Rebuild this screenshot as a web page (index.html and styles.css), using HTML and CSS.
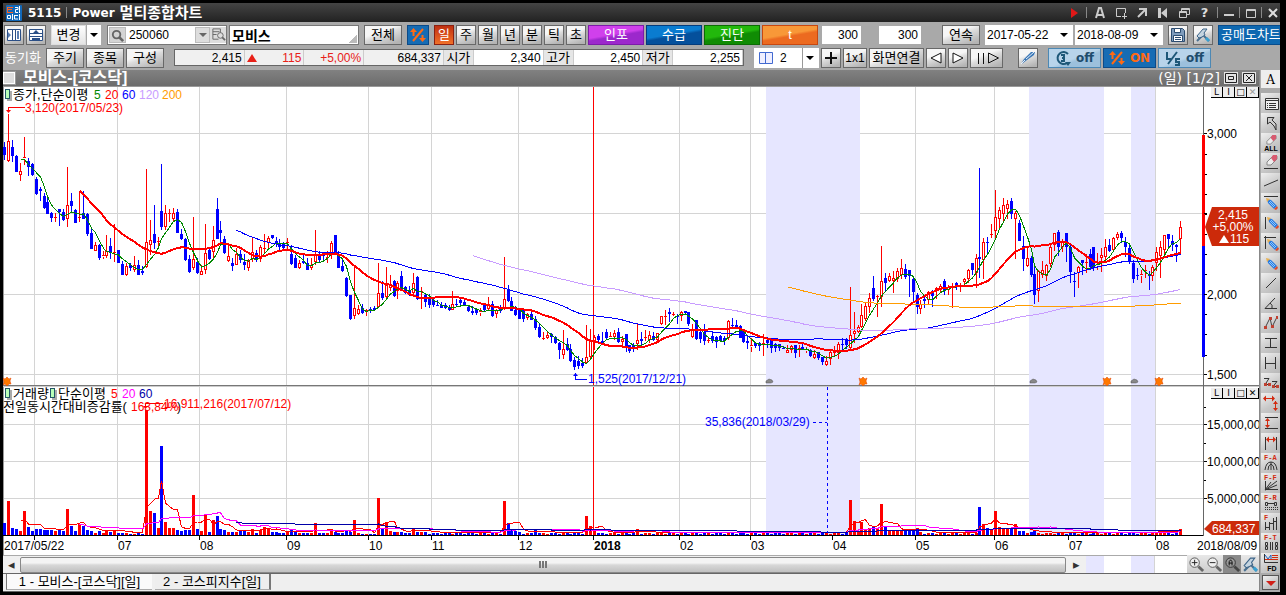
FILE: index.html
```html
<!DOCTYPE html>
<html lang="ko">
<head>
<meta charset="utf-8">
<title>5115 Power 멀티종합차트</title>
<link rel="stylesheet" href="styles.css">
</head>
<body>
<svg class="defs" aria-hidden="true">
  <symbol id="pencil" viewBox="0 0 12 12"><path d="M1 1l4 1 6 6-3 3-6-6z" fill="#2a7be0"/><path d="M3 4l5 5M4 3l5 5" stroke="#8cc8ff"/><path d="M0 0l4 1-3 3z" fill="#e8b050"/><path d="M8 11l3-3 1 2-2 2z" fill="#e04828"/></symbol>
  <symbol id="eraser" viewBox="0 0 12 12"><path d="M1 8l6-6 4 0 0 3-6 6-4 0z" fill="#eee" stroke="#888"/><path d="M5 4l2-3 4 0 0 4-3 3z" fill="#d85a70"/></symbol>
  <symbol id="lens" viewBox="0 0 18 18"><path d="M11 11l5 5" stroke="#666" stroke-width="3"/><circle cx="7" cy="7" r="5" fill="#eee" stroke="#555"/></symbol>
  <symbol id="wrench" viewBox="0 0 16 16"><path d="M2 14l7-7M7 7l7 7" stroke="#4a7090" stroke-width="2" fill="none"/><path d="M2 9l6-7h4l-3 4 1 2-3 2-3 1z" fill="#c4d4e0" stroke="#3d6488"/><path d="M11 11l3 3" stroke="#3aa0d0" stroke-width="3"/></symbol>
  <symbol id="updown" viewBox="0 0 16 16"><path d="M3.500 4v5M12.500 8v5M3 14L13 2" stroke="currentColor" stroke-width="2" fill="none"/><path d="M0 5l3.500-4L7 5zM9 11h7l-3.500 4z" fill="currentColor"/></symbol>
</svg>
<div class="window">
  <header class="titlebar">
    <svg class="logo" viewBox="0 0 16 16"><rect width="16" height="16" rx="1" fill="#1268b8"/><path d="M1 2.500h6M1 4.500h5M1 7.500h6M1.500 2v6" stroke="#ff6420" fill="none"/><path d="M9 2.500h3v2H9.500v3H12M13.500 1v7M1.500 10.500h3v3h-3zM6.500 9v6M8 10.500h4M8.500 10v4H12M13.500 9v6" stroke="#fff" fill="none"/></svg>
    <h1><span class="latin">5115</span><i></i><span class="latin">Power</span> 멀티종합차트</h1>
    <div class="winbtns">
      <button aria-label="재생"><svg viewBox="0 0 12 12"><path d="M3 1l7 5-7 5z" fill="#e01818"/></svg></button><i></i>
      <button aria-label="글꼴"><svg viewBox="0 0 12 12"><path d="M2 11L5 1h2l3 10M3 8h6" stroke="#ccc" stroke-width="2" fill="none"/></svg></button>
      <button aria-label="추가"><svg viewBox="0 0 12 12"><path d="M6 9.500H1.500v-8h9V6M9.500 6v6M7 9.500h5" stroke="#ccc" fill="none"/></svg></button>
      <button aria-label="내보내기"><svg viewBox="0 0 12 12"><path d="M3 2h7v7M10 2L2 10" stroke="#ccc" stroke-width="2" fill="none"/></svg></button>
      <button aria-label="처음"><svg viewBox="0 0 12 12"><path d="M1 1h3v10H1zM10 1v10L4 6z" fill="#ccc"/></svg></button>
      <button aria-label="복제"><svg viewBox="0 0 12 12"><path d="M3.500 4V1.500h8v6H9M1.500 4.500h7v6h-7zM1 5.500h8M3 2.500h9" stroke="#ccc" fill="none"/></svg></button>
      <button aria-label="도움말">?</button><i></i>
      <button aria-label="최소화"><svg viewBox="0 0 12 12"><path d="M1 8h10" stroke="#ccc" stroke-width="2"/></svg></button><i></i>
      <button aria-label="최대화"><svg viewBox="0 0 12 12"><path d="M1.500 2.500h9v8h-9zM1 3.500h10" stroke="#ccc" fill="none"/></svg></button><i></i>
      <button aria-label="닫기"><svg viewBox="0 0 12 12"><path d="M2 2l8 8M10 2l-8 8" stroke="#ddd" stroke-width="2"/></svg></button>
    </div>
  </header>

  <div class="toolbar row-a">
    <button class="btn sq" aria-label="왼쪽 패널"><svg viewBox="0 0 16 16"><path d="M1.500 2.500h13v11h-13zM6.500 2v12M9.500 2v12" stroke="#2b4f86" fill="#fff"/><path d="M2 5l3 3-3 3zM11 4h2v8h-2z" fill="#5c80b4"/></svg></button>
    <button class="btn sq" aria-label="위 패널"><svg viewBox="0 0 16 16"><path d="M1.500 2.500h13v11h-13zM1 6.500h14M1 9.500h14" stroke="#2b4f86" fill="#fff"/><path d="M5 6l3-3 3 3zM4 11h8v2H4z" fill="#2b4f86"/></svg></button>
    <div class="split g3"><button class="btn">변경</button><button class="drop" aria-label="변경 목록"></button></div>
    <div class="code g4"><span class="mag"><svg viewBox="0 0 16 16"><circle cx="7" cy="7" r="4" stroke="#666" stroke-width="2" fill="none"/><path d="M10 10l4 4" stroke="#666" stroke-width="3"/></svg></span><input aria-label="종목코드" value="250060"><button class="drop grey" aria-label="종목 목록"></button><button class="find" aria-label="종목 찾기"><svg viewBox="0 0 16 16"><path d="M8 13H2V2h8v4M2 5h7M2 8h4" stroke="#666" fill="none"/><circle cx="10" cy="9" r="3" stroke="#666" fill="none"/><path d="M12 11l3 3" stroke="#666" stroke-width="2"/></svg></button></div>
    <input class="name" aria-label="종목명" value="모비스">
    <button class="btn w38 g3">전체</button>
    <button class="btn toggle w22 g3" aria-label="등락"><svg viewBox="0 0 16 16"><use href="#updown"/></svg></button>
    <button class="btn sq hot g3">일</button><button class="btn sq">주</button><button class="btn sq">월</button><button class="btn sq">년</button><button class="btn sq">분</button><button class="btn sq">틱</button><button class="btn sq">초</button>
    <button class="btn tone purple">인포</button><button class="btn tone blue">수급</button><button class="btn tone green">진단</button><button class="btn tone orange">t</button>
    <input class="num w40 g2" aria-label="표시 개수" value="300">
    <input class="num w42 g16" aria-label="전체 개수" value="300">
    <button class="btn w38 g19">연속</button>
    <label class="pick g3"><select aria-label="시작일"><option>2017-05-22</option></select></label>
    <label class="pick"><select aria-label="종료일"><option>2018-08-09</option></select></label>
    <button class="btn sq g3" aria-label="저장"><svg viewBox="0 0 16 16"><path d="M1.500 1.500h11l2 2v11h-13z" fill="#7f9cbc" stroke="#2c4c70"/><path d="M4.500 1.500h6v4h-6zM3.500 8.500h9v6h-9z" fill="#fff" stroke="#2c4c70"/><path d="M5 10.500h6M5 12.500h6" stroke="#2c4c70"/></svg></button>
    <button class="btn sq g3" aria-label="설정"><svg viewBox="0 0 16 16"><use href="#wrench"/></svg></button>
    <button class="btn short g3">공매도차트</button>
  </div>

  <div class="toolbar row-b">
    <span class="sync">동기화</span>
    <button class="btn w38">주기</button><button class="btn w38">종목</button><button class="btn w38">구성</button>
    <div class="quote g8">
      <b class="w70">2,415</b><b class="w60 up"><s></s>115</b><b class="w60 up">+5,00%</b><b class="w80">684,337</b>
      <em>시가</em><b class="w70 wh">2,340</b><em>고가</em><b class="w70 wh">2,450</b><em>저가</em><b class="w70 wh">2,255</b>
    </div>
    <label class="pick panes g8"><svg viewBox="0 0 16 14"><path d="M1.500 1.500h13v11h-13zM7.500 1v12" stroke="#4169d0" fill="#eef"/></svg><select aria-label="화면 분할"><option>2</option></select></label>
    <button class="btn sq plus" aria-label="추가"><svg viewBox="0 0 16 16"><path d="M2 8h12M8 2v12" stroke="#111" stroke-width="2"/></svg></button>
    <button class="btn w24">1x1</button><button class="btn w55">화면연결</button>
    <button class="btn sq" aria-label="이전"><svg viewBox="0 0 16 16"><path d="M13 3v10L3 8z" stroke="#111" fill="#fff"/></svg></button>
    <button class="btn sq" aria-label="다음"><svg viewBox="0 0 16 16"><path d="M3 3v10l10-5z" stroke="#111" fill="#fff"/></svg></button>
    <button class="btn w33" aria-label="천천히 재생"><svg class="wide" viewBox="0 0 26 16"><path d="M4.500 3v11M9.500 3v11M14.500 3v10l10-5z" stroke="#111" fill="none"/></svg></button>
    <button class="btn sq g13" aria-label="펜"><svg viewBox="0 0 16 16"><path d="M1 14l3-5 7-7 4 0-1 3-7 5-4 3z" fill="#3b78b8"/><path d="M6 9l8-7M1 14l4-4" stroke="#e8f0f8"/></svg></button>
    <button class="btn sw g8"><svg viewBox="0 0 16 16"><path d="M12 13a6 6 0 1 1 1-9" stroke="#1e5878" stroke-width="2" fill="none"/><path d="M10 12h6l-3 4z" fill="#1e5878"/><path d="M6 5h3v6H6M7 8h2" stroke="#1e5878" stroke-width="2" fill="none"/></svg>off</button>
    <button class="btn sw on"><svg viewBox="0 0 16 16"><use href="#updown"/></svg>ON</button>
    <button class="btn sw"><svg viewBox="0 0 16 16"><path d="M2 2v7h4M3 14L12 2M15 9h-4v3h3v3h-4" stroke="#1e5878" stroke-width="2" fill="none"/></svg>off</button>
  </div>

  <div class="body">
    <main class="chartcol">
      <div class="caption"><button class="box" aria-label="선택"></button><h2>모비스-[코스닥]</h2><span class="page">(일) [1/2]</span>
        <button class="cap" aria-label="확대"><svg viewBox="0 0 14 12"><path d="M1.500 1.500h11v9h-11zM4.500 4.500h5v3h-5z" stroke="#222" fill="none"/></svg></button>
        <button class="cap" aria-label="닫기"><svg viewBox="0 0 14 12"><path d="M1.500 1.500h11v9h-11zM4 3l6 6M10 3L4 9" stroke="#222" fill="none"/></svg></button>
      </div>
      <div class="plot">
        <svg id="chart" viewBox="3 87 1256 468" role="img" aria-label="모비스 일봉 차트"></svg>
        <div class="mini top"><button>L</button><button>I</button><button>□</button><button class="dim">✕</button></div>
        <div class="mini low"><button>L</button><button>I</button><button>□</button><button>✕</button></div>
      </div>
      <div class="scrollrow">
        <div class="track"><button aria-label="왼쪽">◂</button><span class="thumb"><i></i><i></i><i></i></span><button class="wideend" aria-label="오른쪽">▸</button></div>
        <div class="tail"><i class="t1"></i><i class="t2"></i></div>
        <button class="zm" aria-label="확대"><svg viewBox="0 0 18 18"><use href="#lens"/><path d="M4 7h6M7 4v6" stroke="#222"/></svg></button>
        <button class="zm" aria-label="축소"><svg viewBox="0 0 18 18"><use href="#lens"/><path d="M4 7h6" stroke="#222"/></svg></button>
        <button class="zm dark" aria-label="자동"><svg viewBox="0 0 18 18"><path d="M11 11l5 5" stroke="#444" stroke-width="3"/><circle cx="7" cy="7" r="5" fill="#999" stroke="#333"/><path d="M5.500 10V6L7 4l1.500 2v4M5 7.500h4" stroke="#111" fill="none"/></svg></button>
        <button class="zm" aria-label="도구"><svg viewBox="0 0 16 16"><use href="#wrench"/></svg></button>
      </div>
      <nav class="tabs"><button class="active">1 - 모비스-[코스닥][일]</button><button>2 - 코스피지수[일]</button></nav>
    </main>
    <aside class="tools">
      <button class="first" aria-label="글자">A</button>
      <button aria-label="목록"><svg viewBox="0 0 19 20"><path d="M4.500 5.500h13v11h-13zM4 7.500h13M6 10.500h1M8 10.500h7M6 12.500h1M8 12.500h7M6 14.500h1M8 14.500h7" stroke="#333" fill="#eee"/></svg></button>
      <button aria-label="선택"><svg viewBox="0 0 19 20"><path d="M6.500 11V4.500H13L11 7l4 4v6l-2-4-4-4z" stroke="#333" fill="#ccc"/></svg></button>
      <button aria-label="모두 지우기"><svg viewBox="0 0 19 20"><use href="#eraser" x="5" y="1" width="11" height="11"/><text x="10" y="18" font-size="7" text-anchor="middle" font-weight="bold">ALL</text></svg></button>
      <button aria-label="지우기"><svg viewBox="0 0 19 20"><use href="#eraser" x="5" y="1" width="12" height="12"/><path d="M3 15.500h14" stroke="#333"/></svg></button>
      <button aria-label="추세선"><svg viewBox="0 0 19 20"><path d="M3 13l14-6" stroke="#333"/></svg></button>
      <button aria-label="가로선"><svg viewBox="0 0 19 20"><path d="M3 3.500h14" stroke="#333"/><use href="#pencil" x="5" y="5" width="12" height="12"/></svg></button>
      <button aria-label="세로선"><svg viewBox="0 0 19 20"><path d="M4.500 4v12" stroke="#333"/><use href="#pencil" x="6" y="4" width="12" height="12"/></svg></button>
      <button aria-label="십자선"><svg viewBox="0 0 19 20"><path d="M3 4.500h12M4.500 3v13" stroke="#333"/><use href="#pencil" x="6" y="6" width="12" height="12"/></svg></button>
      <button aria-label="그리기"><svg viewBox="0 0 19 20"><use href="#pencil" x="5" y="5" width="12" height="12"/></svg></button>
      <button aria-label="선분"><svg viewBox="0 0 19 20"><path d="M5 15L15 5" stroke="#333"/></svg></button>
      <button aria-label="각도선"><svg viewBox="0 0 19 20"><path d="M16 15.500H4L14 5M9 10q3 2 2 5" stroke="#333" fill="none"/></svg></button>
      <button aria-label="N형"><svg viewBox="0 0 19 20"><path d="M4 15L9 5l2 9 5-10" stroke="#444" fill="none"/><path d="M3 13h3v3H3zM8 4h3v3H8zM10 12h3v3h-3zM15 3h2v3h-2z" fill="#c04030"/></svg></button>
      <button aria-label="가로 채널"><svg viewBox="0 0 19 20"><path d="M4 5.500h12M4 14.500h12M9.500 5v10" stroke="#333"/></svg></button>
      <button aria-label="세로 채널"><svg viewBox="0 0 19 20"><path d="M4.500 4v12M14.500 4v12M5 10.500h10" stroke="#333"/></svg></button>
      <button aria-label="지그재그"><svg viewBox="0 0 19 20"><path d="M3 5.500h5L4 11.500h5M11 8.500h5l-4 5h5" stroke="#333" fill="none"/><path d="M3 10h3v3H3zM7 10h3v3H7zM11 12h3v3h-3zM15 12h3v3h-3z" fill="#c04030"/></svg></button>
      <button aria-label="가로세로"><svg viewBox="0 0 19 20"><path d="M3 5.500h10M14.500 8v9" stroke="#d22a10"/><path d="M2 5.500l3-3v6zM14 5.500l-3-3v6zM12 11h5l-2.500-3zM12 15h5l-2.500 3z" fill="#d22a10"/></svg></button>
      <button aria-label="높이"><svg viewBox="0 0 19 20"><path d="M4 4.500h13M4 15.500h13" stroke="#333"/><path d="M6.500 6v8" stroke="#d22a10"/><path d="M4 8l2.500-3L9 8zM4 12h5l-2.500 3z" fill="#d22a10"/></svg></button>
      <button aria-label="너비"><svg viewBox="0 0 19 20"><path d="M4.500 4v13M15.500 4v13" stroke="#333"/><path d="M6 6.500h8" stroke="#d22a10"/><path d="M5 6.500l3-3v6zM15 6.500l-3-3v6z" fill="#d22a10"/></svg></button>
      <button aria-label="피보나치 아크"><svg viewBox="0 0 19 20"><text class="f" x="3" y="7">F-A</text><path d="M4 17q1-8 6-8t6 8M7 17q0-5 3-6 3 1 3 6M10 9v8" stroke="#333" fill="none"/></svg></button>
      <button aria-label="피보나치 팬"><svg viewBox="0 0 19 20"><text class="f" x="3" y="7">F-F</text><path d="M4.500 8v8.500H17M4 17L16 8M4 17l12-5M4 17l6-8" stroke="#333" fill="none"/></svg></button>
      <button aria-label="피보나치 되돌림"><svg viewBox="0 0 19 20"><text class="f" x="3" y="7">F-R</text><path d="M4.500 9.500h2v3h-2zM13.500 9.500h2v3h-2zM7 10.500h6" stroke="#333" fill="none"/><path d="M4 14.500h13M4 16.500h13" stroke="#333" stroke-dasharray="1 1"/></svg></button>
      <button aria-label="피보나치 파동"><svg viewBox="0 0 19 20"><text class="f" x="3" y="7">F</text><path d="M4.500 9v8M8.500 9v8M12.500 5v12M15.500 4v13M4 14.500h4M8 10.500h4M12 8.500h4" stroke="#333" fill="none"/></svg></button>
      <button aria-label="피보나치 시간"><svg viewBox="0 0 19 20"><text class="f" x="3" y="7">F-T</text><path d="M4.500 9.500h2v3h-2zM4.500 13.500h2v3h-2zM9.500 9v8M11.500 9v8M14.500 9.500h2v3h-2zM14.500 13.500h2v3h-2z" stroke="#333" fill="none"/></svg></button>
      <button aria-label="FD"><svg viewBox="0 0 19 20"><path d="M3.500 1v8.500H17" stroke="#333" fill="none"/><path d="M11 2.500h6M11 4.500h6M4 6.500h13" stroke="#d22a10" fill="none"/><path d="M4 2l3 4 3-4v4" stroke="#2060c0" fill="none"/><text x="11" y="18" font-size="7" text-anchor="middle" font-weight="bold">FD</text></svg></button>
      <button class="more" aria-label="더보기"><svg viewBox="0 0 14 12"><path d="M2 4h10L7 9z" fill="#d02018"/></svg></button>
    </aside>
  </div>
</div>
<script src="chart.js"></script>
</body>
</html>
```
FILE: styles.css
```css
* { box-sizing: border-box; }
body { margin: 0; padding: 3px 6px 3px 3px; background: #000; font-family: "Liberation Sans", "Noto Sans CJK KR", sans-serif; font-size: 12px; line-height: 14px; color: #000; }
button, input, select { font: inherit; color: inherit; margin: 0; padding: 0; border: 0; border-radius: 0; background: none; }
button { display: flex; align-items: center; justify-content: center; white-space: nowrap; flex: none; }
svg { display: block; }
.defs { position: absolute; width: 0; height: 0; }
.window { background: #a9a9a9; overflow: hidden; }

.titlebar { display: flex; align-items: center; height: 19px; padding: 0 1px 0 3px; background: linear-gradient(#444, #222); color: #fff; }
.logo { width: 16px; height: 16px; flex: none; }
h1 { display: flex; align-items: center; gap: 5px; margin: 0 0 0 6px; font-size: 15px; line-height: 18px; font-weight: bold; white-space: nowrap; }
h1 .latin { font: bold 12px "DejaVu Sans", sans-serif; }
h1 i, .winbtns i { width: 1px; height: 11px; background: #888; }
.winbtns { display: flex; align-items: center; gap: 4px; margin-left: auto; color: #ddd; font: bold 13px "DejaVu Sans", sans-serif; }
.winbtns button { width: 17px; height: 16px; }
.winbtns button:nth-last-child(-n+5) { width: 13px; }
.winbtns svg { width: 12px; height: 12px; }

.toolbar { display: flex; align-items: center; gap: 2px; background: #a9a9a9; white-space: nowrap; overflow: hidden; font-size: 13px; }
.toolbar > * { flex: none; }
.row-a { height: 25px; padding-left: 1px; }
.row-b { height: 23px; padding: 0 0 2px 2px; }
.g2 { margin-left: 2px; } .g3 { margin-left: 3px; } .g4 { margin-left: 4px; } .g8 { margin-left: 8px; } .g13 { margin-left: 13px; } .g16 { margin-left: 16px; } .g19 { margin-left: 19px; }
.w22 { width: 22px; } .w24 { width: 24px; } .w33 { width: 33px; } .w38 { width: 38px; } .w40 { width: 39px; } .w42 { width: 42px; } .w55 { width: 55px; } .w60 { width: 60px; } .w70 { width: 70px; } .w80 { width: 80px; }
.btn { height: 20px; border: 1px solid #686868; background: linear-gradient(160deg, #f6f6f6 0 35%, #dcdcdc 50%, #b4b4b4 90%); overflow: hidden; }
.btn svg { width: 16px; height: 16px; flex: none; }
.btn svg.wide { width: 26px; }
.sq { width: 20px; }
.w24 { font-size: 12px; }
.split { display: flex; width: 50px; height: 20px; background: #fff; }
.split .btn { width: 35px; border-color: #ddd; background: linear-gradient(#fff, #e4e4e4); }
.drop { width: 15px; border-left: 1px solid #aaa; }
.drop::before { content: ""; border: 4px solid transparent; border-top: 4px solid #000; border-bottom: 0; }
.drop.grey { background: #ddd; border: 1px solid #bbb; }
.drop.grey::before { border-top-color: #666; }
.code { display: flex; width: 120px; height: 20px; padding: 1px; background: #fff; border: 1px solid #777; font-size: 12px; }
.code .mag { width: 17px; background: #d4d4d4; border: 1px solid #bbb; }
.code .mag svg, .find svg { width: 15px; height: 15px; }
.code input { width: 69px; padding-left: 3px; }
.code .find { width: 16px; background: #ddd; }
.name { width: 130px; height: 20px; padding: 0 2px; border: 1px solid #777; background: linear-gradient(135deg, transparent 0 50%, #bbb 50%) right 1px bottom 1px / 8px 8px no-repeat #fff; font-weight: bold; font-size: 14px; }
.toggle, .sw.on { background: #166cb4; border-color: #0c4a88; color: #ff6a14; }
.hot { background: linear-gradient(#c03010, #f07028); border-color: #8a2010; color: #fff; }
.tone { width: 56px; color: #fff; }
.purple { background: linear-gradient(170deg, #d040ec 0 45%, #9c28cc 55%); border-color: #7c1ca8; }
.blue { background: linear-gradient(170deg, #0a7cd0 0 45%, #04509c 55%); border-color: #043c7c; }
.green { background: linear-gradient(170deg, #22b80c 0 45%, #108c04 55%); border-color: #0c6c04; }
.orange { background: linear-gradient(170deg, #f89838 0 45%, #ec6a20 55%); border-color: #c84810; }
.num { height: 18px; padding-right: 3px; background: #fff; text-align: right; font-size: 12px; }
.pick { position: relative; display: flex; align-items: center; width: 88px; height: 20px; background: #fff; font-size: 12px; }
.pick select { appearance: none; flex: 1; min-width: 0; padding-left: 2px; font-size: 12px; }
.pick::after { content: ""; position: absolute; right: 5px; top: 8px; border: 4px solid transparent; border-top: 4px solid #000; border-bottom: 0; pointer-events: none; }
.pick svg { width: 16px; height: 14px; margin-left: 4px; }
.pick.panes { width: 65px; }
.pick.panes select { padding-left: 6px; }
.pick.panes::before { content: ""; position: absolute; right: 16px; top: 0; bottom: 0; border-left: 1px solid #999; }
.short { width: 80px; justify-content: flex-start; padding-left: 2px; background: #0e68b0; border-color: #084c8c; color: #fff; }
.sync { width: 39px; color: #fff; }
.quote { display: flex; width: 570px; height: 17px; border: 1px solid #666; background: #f0f0f0; font-size: 12px; }
.quote b, .quote em { display: flex; align-items: center; font: inherit; height: 15px; border-right: 1px solid #ccc; overflow: hidden; }
.quote b { justify-content: flex-end; padding-right: 2px; flex: 0 1 auto; }
.quote em { flex: 0 0 30px; justify-content: center; font-size: 13px; background: #e6e6e6; }
.quote .wh { background: #fff; }
.quote .up { color: #e82018; }
.quote s { margin: 0 auto 0 2px; border: 5px solid transparent; border-bottom: 8px solid #e82018; border-top: 0; }
.sw { width: 53px; gap: 5px; background: linear-gradient(160deg, #b8d4ea 0 50%, #9cc0dc 60%); border-color: #4c88b4; color: #1e4c6c; font: bold 12px "DejaVu Sans", sans-serif; }

.body { display: flex; align-items: stretch; }
.chartcol { flex: 1; min-width: 0; border-right: 1px solid #888; }
.caption { display: flex; align-items: center; height: 17px; background: linear-gradient(#818181, #6c6c6c); border-bottom: 1px solid #999; color: #fff; gap: 4px; padding-right: 3px; }
.box { width: 12px; height: 12px; background: #ddd; border: 1px solid #fff; outline: 1px solid #999; }
.caption h2 { margin: 0 auto 0 4px; font-size: 16px; line-height: 16px; }
.caption .page { font: 14px/16px "DejaVu Sans", "Noto Sans CJK KR", sans-serif; }
.cap { width: 14px; height: 12px; background: #e4e4e4; }
.cap svg { width: 14px; height: 12px; }
.plot { position: relative; background: #fff; }
#chart { width: 100%; height: auto; background: #fff; font-size: 12px; }
#chart .ko { font-size: 13px; }
.mini { position: absolute; right: 0; display: flex; height: 11px; border-bottom: 1px solid #000; }
.mini.top { top: 0; } .mini.low { top: 301px; }
.mini button { width: 12px; height: 10px; background: #eee; border-right: 1px solid #000; font: 9px/10px "DejaVu Sans", sans-serif; }
.mini .dim { color: #999; }

.scrollrow { display: flex; height: 19px; background: #fff; border-bottom: 1px solid #666; }
.track { flex: 1083; display: flex; align-items: center; background: #f0f0f0; border-top: 1px solid #aaa; }
.track button { width: 17px; font-size: 13px; color: #333; }
.track .wideend { width: 20px; }
.thumb { flex: 1; display: flex; align-items: center; justify-content: center; gap: 1px; height: 16px; border: 1px solid #888; border-radius: 2px; background: linear-gradient(#f4f4f4 0 35%, #d8d8d8 50%, #c0c0c0); }
.thumb i { width: 2px; height: 7px; background: #777; }
.tail { flex: 101; display: grid; grid-template-columns: 18fr 27fr 24fr 32fr; border-top: 1px solid #aaa; }
.tail i { background: #e6e6ff; } .tail .t2 { grid-column: 3; border-right: 1px solid #d4d4d4; }
.zm { width: 18px; height: 18px; background: linear-gradient(#e8e8e8, #ccc); overflow: hidden; }
.zm svg { width: 17px; height: 17px; }
.zm.dark { background: #8a8a8a; }
.tabs { display: flex; height: 18px; padding-left: 3px; gap: 3px; background: #efefef; border-bottom: 1px solid #666; }
.tabs button { width: 116px; height: 16px; border-right: 2px solid #777; border-bottom: 1px solid #aaa; font-size: 13px; background: #eee; }
.tabs .active { width: 146px; border-left: 1px solid #777; border-right: 0; background: #fafafa; }
.tools { flex: none; width: 20px; padding-left: 1px; background: #aaa; }
.tools button { width: 19px; height: 20px; background: linear-gradient(150deg, #f0f0f0, #c8c8c8 60%, #b8b8b8); }
.tools svg { width: 19px; height: 20px; }
.tools .f { font: bold 7px "Liberation Mono", monospace; fill: #d22a10; }
.tools .first { height: 18px; margin-bottom: 5px; padding-top: 2px; font: 12px "DejaVu Serif", serif; background: #eee; }
.tools .more { width: 17px; height: 15px; margin: 2px 1px 0; border: 1px solid #555; }
.tools .more svg { width: 14px; height: 12px; }
```
FILE: chart.js
```js
// One candle per entry: high, low, body top, body bottom, direction (U/D).
// Levels are chart coordinates; the price axis is linear.
const CANDLES = `
142 160 147 155 D;114 162 141 161 U;140 162 147 156 D;155 172 156 172 D;163 181 171 175 U;137 165 157 159 U;158 176 161 167 D;163 176 164 175 D;177 195 179 194 D;187 201 189 191 D;
193 209 196 208 D;198 214 202 214 D;212 222 213 218 D;213 222 217 218 U;209 226 209 212 D;209 221 212 220 D;167 227 205 219 U;193 212 201 206 D;209 223 210 223 D;191 222 217 218 U;
191 219 213 219 D;213 236 214 234 D;229 249 233 249 D;242 251 245 251 U;244 260 245 258 D;251 259 255 257 U;235 258 251 256 U;238 259 246 253 D;224 262 252 253 U;250 263 250 263 D;
261 275 264 275 D;263 276 266 275 U;263 271 265 268 D;256 272 265 270 U;260 275 265 275 D;266 275 271 273 D;169 268 242 267 U;220 255 240 245 U;205 249 234 243 D;237 248 241 242 U;
164 230 211 227 D;205 230 213 227 U;209 222 213 214 U;208 222 213 219 U;209 233 212 233 D;229 240 234 239 D;238 261 239 260 D;255 273 259 272 D;217 270 259 268 U;258 274 262 273 D;
265 275 271 275 U;224 274 253 270 U;247 260 250 259 D;226 258 240 252 U;198 239 209 239 D;221 244 230 233 D;236 254 239 253 D;245 262 256 261 U;258 271 263 266 D;248 265 254 265 U;
250 263 254 260 D;254 270 262 265 D;259 271 261 268 U;238 262 252 259 U;250 262 253 260 D;245 262 247 259 U;234 254 248 249 U;236 248 238 243 U;235 239 235 238 D;237 247 241 244 D;
239 250 243 247 D;242 249 243 248 D;238 251 242 244 U;245 265 254 264 D;255 268 258 268 D;260 269 263 268 U;254 264 261 263 D;258 270 263 270 D;258 270 265 268 U;230 265 254 262 U;
251 263 255 260 D;253 261 255 256 D;251 263 257 258 U;241 259 243 254 U;235 255 235 255 D;251 268 256 268 D;258 272 266 271 D;277 297 278 296 D;295 320 295 319 D;265 319 308 316 U;
305 315 309 314 U;304 314 308 313 D;309 316 310 311 U;307 313 309 310 D;306 311 308 310 D;263 308 293 307 U;281 300 293 298 D;267 300 285 297 U;275 291 284 288 U;280 297 281 296 D;
281 299 283 291 U;271 291 276 290 D;286 294 287 293 D;286 296 291 293 D;273 296 283 293 U;276 300 277 299 D;287 309 291 292 U;294 307 295 302 D;294 308 299 305 D;297 307 300 305 D;
300 306 305 306 D;302 308 305 308 D;303 309 305 308 D;305 311 307 310 D;291 310 304 310 U;299 307 304 305 D;298 305 300 303 D;300 306 302 305 D;305 312 307 311 D;306 315 311 313 D;
309 315 309 313 D;308 316 311 313 U;304 311 305 310 D;297 310 304 309 U;301 317 304 316 D;309 318 310 314 U;305 313 308 311 D;257 310 299 309 U;285 302 289 301 D;297 311 301 311 D;
306 316 310 315 D;308 319 310 319 D;309 322 310 319 D;313 320 314 318 U;310 320 314 320 D;316 330 319 328 D;324 338 327 337 D;332 340 338 339 U;332 339 335 338 U;333 343 334 337 D;
336 344 337 343 D;342 359 343 350 D;330 359 349 355 U;338 351 344 350 D;344 362 349 361 D;357 370 360 367 D;356 369 361 366 D;358 368 363 366 D;325 364 357 363 U;329 360 340 357 U;
335 350 337 341 U;334 343 336 340 D;332 344 341 343 D;329 339 332 338 D;332 339 336 338 U;330 340 333 337 U;328 343 332 342 D;336 348 339 342 U;334 352 334 348 D;345 353 345 351 D;
343 352 345 347 D;324 350 340 344 U;332 346 339 341 D;330 341 337 338 U;331 343 335 340 U;332 341 336 340 D;333 341 333 340 U;316 325 316 324 U;310 325 316 317 U;308 322 312 314 D;
312 316 314 315 U;314 324 316 317 D;311 321 312 316 U;311 314 311 313 D;312 326 312 324 D;324 338 329 337 U;320 340 320 339 D;329 343 332 339 D;324 345 332 341 D;337 343 340 341 U;
331 343 336 341 D;336 348 337 342 D;335 342 336 341 D;336 345 338 341 D;320 340 321 338 U;318 328 325 326 D;320 329 325 328 D;325 338 326 338 D;330 343 331 342 D;337 349 341 343 D;
338 352 345 347 U;342 348 343 346 D;342 351 343 346 D;334 356 343 345 U;337 348 340 343 D;338 353 340 348 D;343 352 344 348 D;344 351 344 348 D;346 349 348 349 D;345 353 350 353 U;
345 353 346 350 U;345 358 345 353 D;345 357 348 349 U;344 350 347 349 D;347 353 349 351 U;349 357 350 356 D;350 359 354 358 U;352 360 352 358 D;357 365 357 362 D;356 366 361 365 U;
350 365 352 359 U;346 357 350 353 U;342 359 344 353 U;338 352 344 345 D;338 349 339 345 D;287 349 335 348 U;312 343 331 334 U;325 333 327 332 U;304 328 315 327 U;302 321 306 319 U;
293 313 298 307 U;276 301 288 299 D;295 317 296 297 U;246 307 281 297 U;273 291 278 283 D;273 282 276 281 U;271 293 278 281 U;268 282 271 279 U;259 279 268 275 U;264 279 269 277 D;
270 297 270 276 D;278 301 279 292 D;293 314 295 307 D;300 314 304 309 U;296 308 299 301 D;291 304 292 300 U;290 307 291 296 D;287 299 288 291 U;284 292 286 290 U;279 295 281 290 D;
285 295 287 290 U;283 308 286 288 U;282 290 283 286 D;283 292 285 287 U;278 286 279 282 U;269 283 270 279 U;263 275 263 270 D;254 288 258 273 U;168 278 257 259 D;238 279 242 260 U;
237 254 242 243 D;224 238 234 235 U;190 238 217 231 U;207 229 210 219 U;198 223 205 214 U;200 219 204 209 U;198 219 201 214 D;211 259 213 219 U;220 241 223 241 D;236 271 246 259 D;
247 267 258 266 U;256 277 258 275 D;267 304 274 295 D;270 302 271 291 U;261 278 270 275 U;264 281 265 276 U;244 267 247 264 U;233 251 233 245 U;230 256 232 247 D;239 252 241 247 U;
233 262 233 247 D;243 283 247 272 D;272 297 281 282 D;266 288 267 273 U;260 275 260 263 D;254 273 262 263 U;249 270 254 267 D;247 271 247 268 D;253 270 264 266 U;248 272 255 258 U;
239 262 247 257 U;239 252 245 251 D;237 251 238 250 U;232 240 234 238 U;231 243 233 238 D;237 257 242 247 D;245 264 248 262 D;260 283 263 279 D;268 280 275 276 D;270 283 274 276 U;
265 278 270 271 U;271 290 275 276 D;265 281 267 276 U;247 271 252 263 U;241 278 247 256 U;235 255 235 250 U;234 249 234 239 D;235 251 241 245 D;244 262 245 247 D;221 254 227 239 U
`.trim().split(';').map(s => {
  const p = s.trim().split(' ');
  return { hi: +p[0], lo: +p[1], top: +p[2], bot: +p[3], up: p[4] === 'U' };
});

const EARLY_VOLUME = [12,34,7,6,4,24,8,4,6,6,5,5,5,4,5,4,26,9,4,11,9,5,4,2,4,2,5,3,5,2,2,2,1,1,2,1,125,24,22,7,89,13,7,7,5,4,5,5,40,6,4,20,3,15,19,6,5,3,3,3,4,4,3,6,2,5,8,6,3,3,2,2,3,5,3,2,2,2,2,12,2,2,2,5,3,2,2,4,3,15,2,1,1,1,1,37,7,12,4,3,3,3,2,2,7,3,3,3];
// x position -> volume on busy days; quiet days fall back to 1-2
const BUSY = { 503:34,507:12,511:5,515:4,519:3,535:6,586:19,590:9,594:4,637:6,849:35,853:14,857:4,861:13,865:5,869:7,873:9,877:6,881:31,885:8,889:5,893:4,897:4,901:5,905:4,909:4,913:6,917:7,921:3,979:28,983:11,987:7,991:6,995:24,999:8,1003:6,1007:6,1011:6,1015:11,1019:4,1023:4,1031:3,1035:4,1160:5,1180:6 };

const X0 = 4.7, STEP = (1180.5 - X0) / (CANDLES.length - 1), BASE = 535;
const xs = CANDLES.map((_, i) => Math.floor(X0 + i * STEP));
const volume = xs.map((_, i) => i < EARLY_VOLUME.length ? EARLY_VOLUME[i] : (i % 3 ? 2 : 1));
Object.keys(BUSY).forEach(k => { volume[Math.round((k - X0 + 0.5) / STEP)] = BUSY[k]; });

const out = [];
const rect = (x, y, w, h, f, extra = '') => out.push(`<rect x="${x}" y="${y}" width="${w}" height="${h}" fill="${f}" ${extra}/>`);
const path = (d, c, w = 1, extra = '') => out.push(`<path d="${d}" stroke="${c}" stroke-width="${w}" fill="none" ${extra}/>`);
const text = (x, y, s, c = '#000', extra = '') => out.push(`<text x="${x}" y="${y}" fill="${c}" ${extra}>${s}</text>`);
const average = (v, n) => v.map((_, i) => i < n - 1 ? null : v.slice(i - n + 1, i + 1).reduce((a, b) => a + b, 0) / n);
const curve = (v, n, c, w) => path('M' + average(v, n).map((y, i) => y === null ? null : `${xs[i] + 0.5} ${y.toFixed(1)}`).filter(Boolean).join('L'), c, w);

const months = [[34,''],[117,'07'],[199,'08'],[286,'09'],[368,'10'],[431,'11'],[518,'12'],[593,'2018'],[679,'02'],[750,'03'],[832,'04'],[915,'05'],[994,'06'],[1068,'07'],[1155,'08']];

out.push('<g shape-rendering="crispEdges">');
months.forEach(m => rect(m[0], 87, 1, 448, '#d4d4d4'));
[133, 213, 294, 374, 424, 461, 498].forEach(y => rect(3, y, 1200, 1, '#d4d4d4'));
[[766, 94], [1029, 75], [1131, 24]].forEach(b => rect(b[0], 87, b[1], 448, '#e6e6ff'));
rect(3, 87, 1, 468, '#999');
rect(593, 87, 1, 448, '#f00');

CANDLES.forEach((c, i) => {
  const x = xs[i], col = c.up ? '#f00' : '#00f';
  if (c.up) {
    rect(x, c.hi, 1, c.top - c.hi, col);
    rect(x, c.bot, 1, Math.max(0, c.lo - c.bot), col);
    if (c.bot - c.top < 3) rect(x - 1, c.top, 3, 1, col);
    else out.push(`<rect x="${x - 0.5}" y="${c.top + 0.5}" width="2" height="${c.bot - c.top - 1}" fill="#fff" stroke="${col}"/>`);
  } else {
    rect(x, c.hi, 1, c.lo - c.hi, col);
    rect(x - 1, c.top, 3, Math.max(1, c.bot - c.top), col);
  }
  rect(x - 1, BASE - volume[i], 3, volume[i], col);
});
const close = CANDLES.map(c => c.up ? c.top : c.bot);
curve(close, 5, '#080', 1);
curve(close, 60, '#00f', 1);
curve(close, 120, '#c89cff', 1);
curve(close, 200, '#ff9c00', 1);
curve(close, 20, '#f00', 2);
const volY = volume.map(v => BASE - 1 - v);
curve(volY, 5, '#f00', 1);
curve(volY, 20, '#f0f', 1);
curve(volY, 60, '#0000a8', 1);

rect(3, 385, 1256, 1, '#777');
rect(3, 386, 1256, 1, '#ccc');
rect(3, 535, 1201, 1, '#000');
rect(1203, 87, 1, 449, '#666');
rect(1202, 135, 3, 111, '#f00');
rect(1202, 246, 3, 111, '#00f');
[133, 213, 294, 374, 424, 461, 498].forEach(y => rect(1204, y, 3, 1, '#000'));
for (let y = 153.5; y < 370; y += 20.1) rect(1205, Math.round(y), 2, 1, '#000');
[407, 443, 480].forEach(y => rect(1204, y, 2, 1, '#000'));
months.forEach(m => rect(m[0], 535, 1, 5, '#000'));
path('M827.5 387V533', '#00f', 1, 'stroke-dasharray="3 3"');
path('M813 422.5H827', '#00f', 1, 'stroke-dasharray="3 3"');
path('M8.5 112V107.5H25', '#f00');
path('M575.5 373V379.5H587', '#00f');
path('M145.5 408V403.5H163', '#f00');
out.push('</g>');
out.push('<path d="M6 110h5l-2.500 3z" fill="#f00"/><path d="M573 376h5l-2.500-3z" fill="#00f"/><path d="M143 406h5l-2.500 3z" fill="#f00"/>');

months.forEach(m => text(m[0] + 1, 550, m[1], '#000', m[1] === '2018' ? 'font-weight="bold"' : ''));
text(4, 550, '2017/05/22');
text(1197, 550, '2018/08/09');
text(1207, 138, '3,000'); text(1207, 299, '2,000'); text(1207, 379, '1,500');
text(1207, 429, '15,000,000'); text(1207, 466, '10,000,000'); text(1207, 503, '5,000,000');

const key = (x, y) => out.push(`<rect x="${x + 2}" y="${y + 2}" width="5" height="10" fill="#aaa"/><rect x="${x + 0.5}" y="${y + 0.5}" width="4" height="9" fill="#b8ffb8" stroke="#256"/>`);
key(5, 89); text(13, 99, '종가,단순이평', '#000', 'class="ko"');
[[94, '5', '#080'], [105, '20', '#f00'], [122, '60', '#00f'], [139, '120', '#c89cff'], [162, '200', '#ff9c00']].forEach(t => text(t[0], 99, t[1], t[2]));
text(25, 112, '3,120(2017/05/23)', '#f00');
text(588, 383, '1,525(2017/12/21)', '#00f');
key(5, 388); text(13, 398, '거래량', '#000', 'class="ko"');
key(50, 388); text(58, 398, '단순이평', '#000', 'class="ko"');
[[111, '5', '#f00'], [122, '20', '#f0f'], [139, '60', '#0000a8']].forEach(t => text(t[0], 398, t[1], t[2]));
text(3, 411, '전일동시간대비증감률(', '#000', 'class="ko"');
text(131, 411, '163,84%', '#f00'); text(177, 411, ')');
text(164, 408, '16,911,216(2017/07/12)', '#f00');
text(705, 426, '35,836(2018/03/29)', '#00f');

[7, 863, 1107, 1159].forEach(x => out.push(`<path d="M${x - 4} 378l2 1 2-2 2 2 2-1-1 3 1 3-2 0-2 2-2-2-2 1 1-3z" fill="#ff7800" stroke="#e04000" stroke-width=".5"/>`));
[769, 1033, 1134].forEach(x => out.push(`<path d="M${x - 3} 383v-2l3-2 3 1 1 2-2 1z" fill="#888" stroke="#555" stroke-width=".5"/>`));
out.push('<path d="M1205 227L1212 207H1259V246H1212Z" fill="#cc2a0a"/><path d="M1204 529L1212 521H1259V535H1212Z" fill="#cc2a0a"/>');
text(1233, 219, '2,415', '#fff', 'text-anchor="middle"');
text(1233, 231, '+5,00%', '#fff', 'text-anchor="middle"');
out.push('<path d="M1219 243l5-8 5 8z" fill="#fff"/>');
text(1230, 243, '115', '#fff');
text(1212, 533, '684,337', '#fff');
document.getElementById('chart').innerHTML = out.join('');
```
